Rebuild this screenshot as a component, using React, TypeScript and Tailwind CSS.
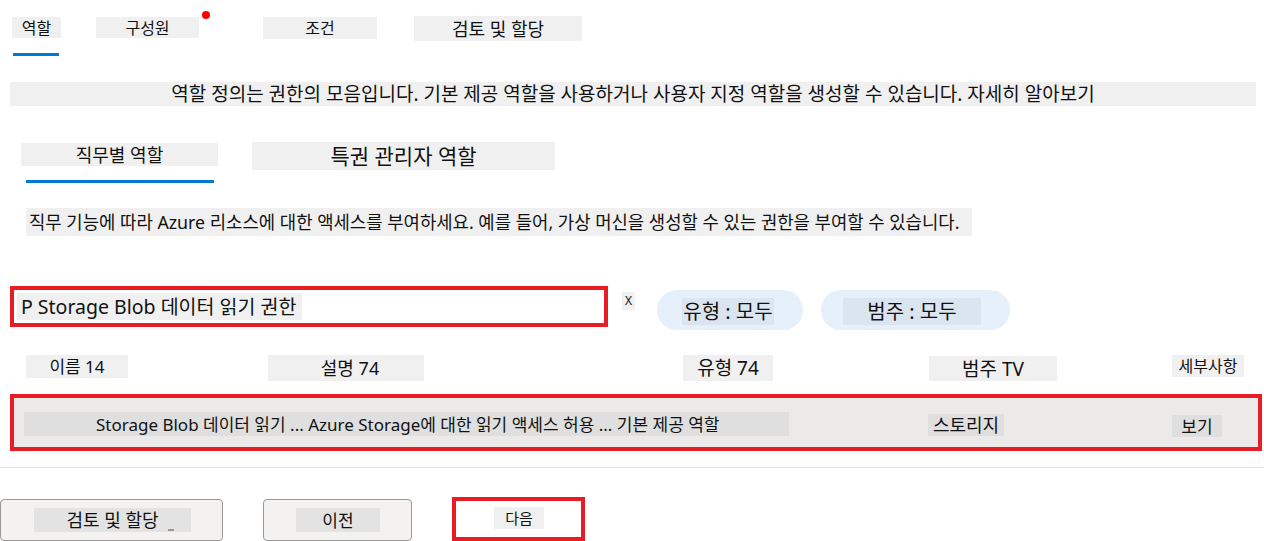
import React from "react";

export default function App() {
  return (
    <div className="w-[1264px] h-[541px] bg-white overflow-hidden text-[#111] font-['Noto_Sans','Noto_Sans_CJK_KR',sans-serif]">
      {/* top tabs */}
      <div className="flex items-start pt-[17px] h-[82px]">
        <div className="ml-[12px] flex flex-col">
          <div className="w-[49px] h-[21px] bg-[#f0f0f0] text-[16px] leading-[22px] text-center">역할</div>
          <div className="mt-[15px] ml-[1px] w-[46px] h-[3px] bg-[#0078d4]" />
        </div>
        <div className="ml-[35px] relative w-[103px] h-[21px] bg-[#f0f0f0] text-[16px] leading-[22px] text-center">
          구성원
          <span className="absolute left-[106px] top-[-6px] w-[8px] h-[8px] rounded-full bg-[#f00]" />
        </div>
        <div className="ml-[64px] w-[114px] h-[22px] bg-[#f0f0f0] text-[16px] leading-[23px] text-center">조건</div>
        <div className="ml-[37px] -mt-[1px] w-[168px] h-[25px] bg-[#f0f0f0] text-[18px] leading-[26px] text-center">검토 및 할당</div>
      </div>

      {/* description */}
      <div className="ml-[10px] w-[1246px] h-[24px] bg-[#f0f0f0] text-[19px] leading-[25px] text-center whitespace-nowrap">
        역할 정의는 권한의 모음입니다. 기본 제공 역할을 사용하거나 사용자 지정 역할을 생성할 수 있습니다. 자세히 알아보기
      </div>

      {/* sub tabs */}
      <div className="flex items-start mt-[37px] h-[65px]">
        <div className="ml-[21px] flex flex-col">
          <div className="w-[197px] h-[23px] bg-[#f0f0f0] text-[18px] leading-[24px] text-center">직무별 역할</div>
          <div className="mt-[14px] ml-[5px] w-[188px] h-[3px] bg-[#0078d4]" />
        </div>
        <div className="ml-[34px] -mt-[1px] w-[303px] h-[28px] bg-[#f0f0f0] text-[21px] leading-[29px] text-center">특권 관리자 역할</div>
      </div>

      <div className="ml-[26px] w-[946px] h-[28px] bg-[#f0f0f0] text-[17.8px] leading-[29px] pl-[3px] whitespace-nowrap">
        직무 기능에 따라 Azure 리소스에 대한 액세스를 부여하세요. 예를 들어, 가상 머신을 생성할 수 있는 권한을 부여할 수 있습니다.
      </div>

      {/* search / filters */}
      <div className="flex items-start mt-[50px] h-[69px]">
        <div className="ml-[10px] w-[598px] h-[41px] border-[4px] border-[#e81c24] pl-[3px] pt-[3px]">
          <div className="inline-block h-[27px] bg-[#f0f0f0] text-[19.5px] leading-[27px] pl-[4px] pr-[6px] whitespace-nowrap">P Storage Blob 데이터 읽기 권한</div>
        </div>
        <div className="ml-[14px] mt-[6px] w-[13px] h-[18px] bg-[#f0f0f0] text-[12px] leading-[18px] text-center">X</div>
        <div className="ml-[22px] mt-[4px] w-[146px] h-[40px] rounded-full bg-[#e5f0fa] pl-[25px] pt-[8px]">
          <div className="w-[92px] h-[27px] bg-[#dbe5ef] text-[20px] leading-[28px] text-center whitespace-nowrap">유형 : 모두</div>
        </div>
        <div className="ml-[18px] mt-[4px] w-[189px] h-[40px] rounded-full bg-[#e5f0fa] pl-[22px] pt-[8px]">
          <div className="w-[138px] h-[27px] bg-[#dbe5ef] text-[20px] leading-[28px] text-center whitespace-nowrap">범주 : 모두</div>
        </div>
      </div>

      {/* header row */}
      <div className="flex items-start h-[39px]">
        <div className="ml-[26px] w-[102px] h-[23px] bg-[#f0f0f0] text-[17px] leading-[24px] text-center">이름 14</div>
        <div className="ml-[140px] w-[156px] h-[26px] bg-[#f0f0f0] text-[18px] leading-[27px] text-center pl-[8px]">설명 74</div>
        <div className="ml-[259px] w-[90px] h-[26px] bg-[#f0f0f0] text-[19px] leading-[27px] text-center">유형 74</div>
        <div className="ml-[156px] mt-[1px] w-[128px] h-[25px] bg-[#f0f0f0] text-[19px] leading-[26px] text-center">범주 TV</div>
        <div className="ml-[115px] w-[72px] h-[22px] bg-[#f0f0f0] text-[16px] leading-[22px] text-center">세부사항</div>
      </div>

      {/* data row */}
      <div className="ml-[10px] w-[1252px] h-[57px] border-[4px] border-[#e81c24] bg-[#ebeae9] flex items-start pt-[14px]">
        <div className="ml-[10px] w-[765px] h-[24px] bg-[#dfdfdf] text-[17px] leading-[25px] pl-[72px] whitespace-nowrap">
          Storage Blob 데이터 읽기 ... Azure Storage에 대한 읽기 액세스 허용 ... 기본 제공 역할
        </div>
        <div className="ml-[139px] mt-[2px] w-[76px] h-[22px] bg-[#dfdfdf] text-[18px] leading-[23px] text-center">스토리지</div>
        <div className="ml-[168px] mt-[3px] w-[50px] h-[22px] bg-[#dfdfdf] text-[17px] leading-[23px] text-center">보기</div>
      </div>

      {/* divider */}
      <div className="mt-[16px] h-px bg-[#e1e1e1]" />

      {/* buttons */}
      <div className="flex items-start mt-[31px]">
        <div className="w-[223px] h-[42px] border border-[#999] rounded-[4px] bg-[#f3f2f1] pt-[8px] pl-[33px]">
          <div className="relative w-[157px] h-[24px] bg-[#e3e3e3] text-[18px] leading-[25px] text-center">
            검토 및 할당
            <span className="absolute left-[134px] top-[21px] w-[6px] h-[2px] bg-[#999]" />
          </div>
        </div>
        <div className="ml-[40px] w-[149px] h-[42px] border border-[#999] rounded-[4px] bg-[#f3f2f1] pt-[8px] pl-[32px]">
          <div className="w-[84px] h-[24px] bg-[#e3e3e3] text-[17px] leading-[25px] text-center">이전</div>
        </div>
        <div className="ml-[40px] -mt-[2px] w-[133px] h-[44px] border-[4px] border-[#e81c24] bg-white pt-[6px] pl-[38px]">
          <div className="w-[50px] h-[22px] bg-[#f0f0f0] text-[15px] leading-[23px] text-center">다음</div>
        </div>
      </div>
    </div>
  );
}
